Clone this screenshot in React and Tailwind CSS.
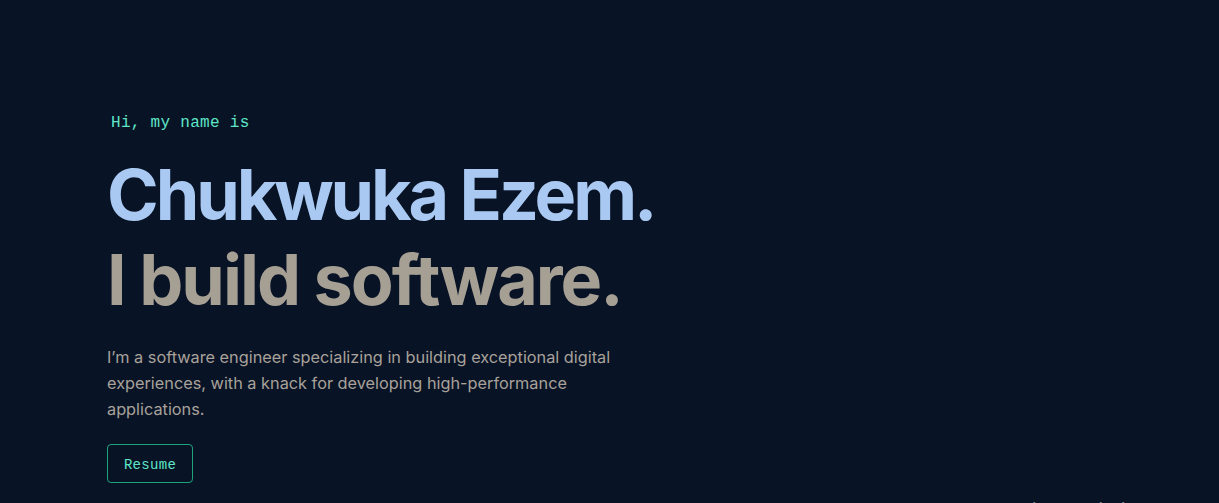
export default function App() {
  return (
    <main className="relative h-[503px] w-full overflow-hidden bg-[#081326]">
      <section className="flex flex-col items-start pl-[107px] pt-[112px]">
        <p className="pl-[4px] font-['Liberation_Mono',monospace] text-[16px] leading-[22px] tracking-[0.3px] text-[#5fe6c8]">
          Hi, my name is
        </p>

        <h1 className="mt-[18px] font-['Inter',sans-serif] text-[70px] font-bold leading-[85px] tracking-[-3.1px] text-[#a9c9f2]">
          Chukwuka Ezem.
        </h1>
        <h2 className="font-['Inter',sans-serif] text-[70px] font-bold leading-[85px] tracking-[-2px] text-[#a69f94]">
          I build software.
        </h2>

        <p className="mt-[22px] max-w-[530px] font-['Inter',sans-serif] text-[16.3px] leading-[26px] text-[#a8a29a]">
          I’m a software engineer specializing in building exceptional digital experiences, with a knack for developing high-performance applications.
        </p>

        <button className="mt-[22px] h-[39px] w-[86px] rounded-[4px] border border-[#1fa37c] pt-[3px] font-['Liberation_Mono',monospace] text-[14px] tracking-[0.3px] text-[#5fe6c8]">
          Resume
        </button>
      </section>

      {/* windows watermark, clipped at the bottom edge */}
      <div className="absolute left-[1003px] top-[495px] font-['Liberation_Sans',sans-serif] text-[20px] text-[#7a808a]">
        Activate Windows
      </div>
    </main>
  );
}
